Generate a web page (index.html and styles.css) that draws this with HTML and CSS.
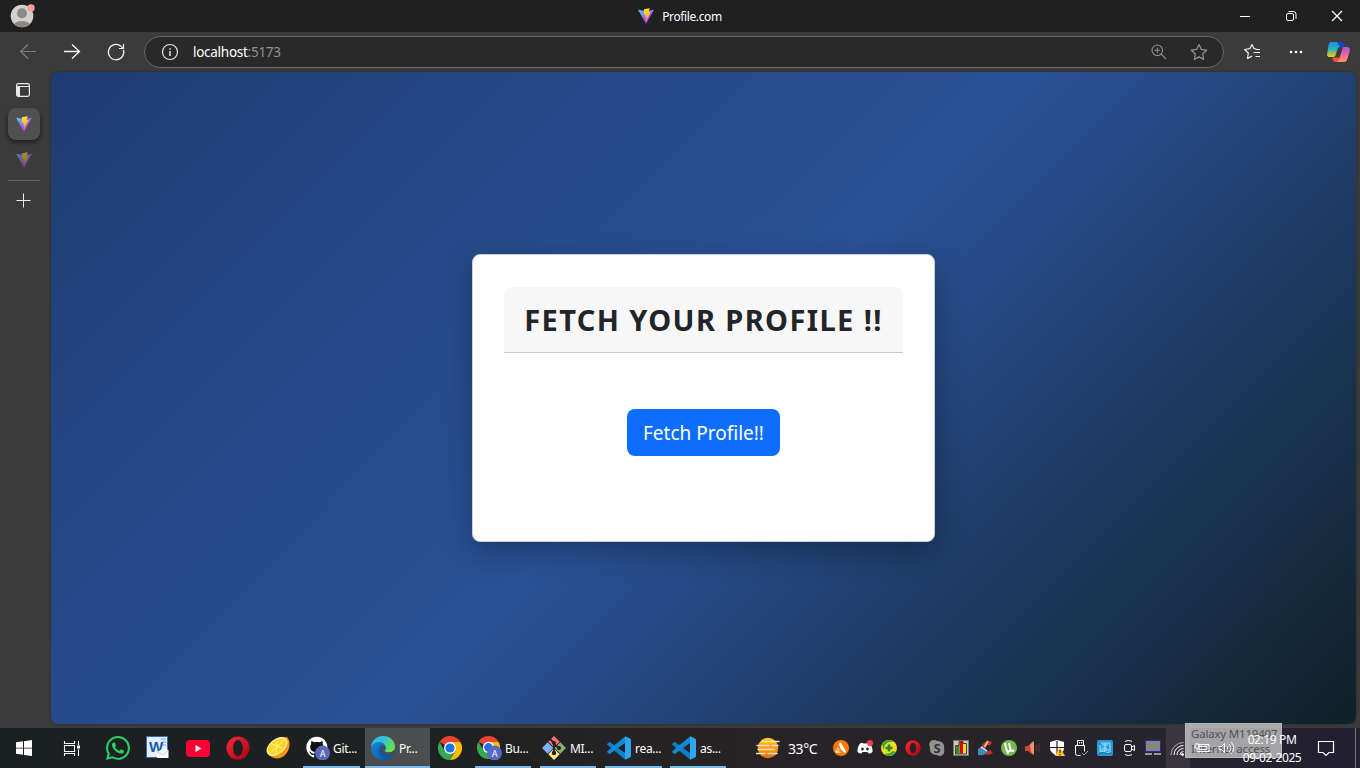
FILE: index.html
```html
<!DOCTYPE html>
<html lang="en">
<head>
<meta charset="utf-8">
<title>Profile.com</title>
<link rel="stylesheet" href="styles.css">
</head>
<body>
<svg class="defs" width="0" height="0" aria-hidden="true">
  <defs>
    <linearGradient id="va" x1="6" y1="33" x2="235" y2="344" gradientUnits="userSpaceOnUse"><stop stop-color="#41d1ff"/><stop offset="1" stop-color="#bd34fe"/></linearGradient>
    <linearGradient id="vb" x1="194" y1="9" x2="236" y2="293" gradientUnits="userSpaceOnUse"><stop stop-color="#ffea83"/><stop offset=".083" stop-color="#ffdd35"/><stop offset="1" stop-color="#ffa800"/></linearGradient>
    <linearGradient id="edgeTop" x1="0" y1="0" x2="1" y2=".5"><stop stop-color="#2fb4ea"/><stop offset=".5" stop-color="#31c3d4"/><stop offset="1" stop-color="#67e04d"/></linearGradient>
    <linearGradient id="edgeLow" x1="0" y1="0" x2="1" y2="1"><stop stop-color="#1690dc"/><stop offset="1" stop-color="#0c4f9c"/></linearGradient>
    <linearGradient id="opera" x1="0" y1="0" x2="1" y2="1"><stop stop-color="#ff2a38"/><stop offset="1" stop-color="#a70014"/></linearGradient>
    <linearGradient id="copA" x1="0" y1="0" x2="0" y2="1"><stop stop-color="#1b8cf0"/><stop offset=".5" stop-color="#2fb4b4"/><stop offset="1" stop-color="#f2d000"/></linearGradient>
    <linearGradient id="copB" x1="0" y1="0" x2="0" y2="1"><stop stop-color="#a259ec"/><stop offset=".5" stop-color="#f0619a"/><stop offset="1" stop-color="#ff9a55"/></linearGradient>
    <linearGradient id="sun" x1="0" y1="0" x2="0" y2="1"><stop stop-color="#ffcf18"/><stop offset="1" stop-color="#ee6b18"/></linearGradient>
  </defs>
  <symbol id="vite" viewBox="0 0 410 404">
    <path fill="url(#va)" d="M399.641 59.5246L215.643 388.545C211.844 395.338 202.084 395.378 198.228 388.618L10.5817 59.5563C6.38087 52.1896 12.6802 43.2665 21.0281 44.7586L205.223 77.6824C206.398 77.8924 207.601 77.8904 208.776 77.6763L389.119 44.8058C397.439 43.2894 403.768 52.1434 399.641 59.5246Z"/>
    <path fill="url(#vb)" d="M292.965 1.5744L156.801 28.2552C154.563 28.6937 152.906 30.5903 152.771 32.8664L144.395 174.33C144.198 177.662 147.258 180.248 150.51 179.498L188.42 170.749C191.967 169.931 195.172 173.055 194.443 176.622L183.18 231.775C182.422 235.487 185.907 238.661 189.532 237.56L212.947 230.446C216.577 229.344 220.065 232.527 219.297 236.242L201.398 322.875C200.278 328.294 207.486 331.249 210.492 326.603L212.5 323.5L323.454 102.072C325.312 98.3645 322.108 94.137 318.036 94.9228L279.014 102.454C275.347 103.161 272.227 99.746 273.262 96.1583L298.731 7.86689C299.767 4.27314 296.636 0.855181 292.965 1.5744Z"/>
  </symbol>
  <symbol id="chrome" viewBox="0 0 24 24">
    <path fill="#ea4335" d="M12 12L1.6 6A12 12 0 0 1 22.4 6H12z"/>
    <path fill="#fbbc05" d="M12 6H22.4A12 12 0 0 1 12 24L17.2 15z"/>
    <path fill="#34a853" d="M1.6 6L6.8 15 12 18l5.2-3L12 24A12 12 0 0 1 1.6 6z"/>
    <circle cx="12" cy="12" r="6" fill="#fff"/><circle cx="12" cy="12" r="4.6" fill="#1a73e8"/>
  </symbol>
  <symbol id="code" viewBox="0 0 24 24">
    <path fill="#0f7fcb" d="M.3 7.700L2 6.200c.4-.3.8-.3 1.200 0L18 17v6.600L.3 8.800a.8.8 0 0 1 0-1.100z"/>
    <path fill="#1389d5" d="M.3 16.300L2 17.800c.4.3.8.3 1.200 0L18 7V.4L.3 15.200a.8.8 0 0 0 0 1.100z"/>
    <path fill="#2da5f0" d="M18 .2L23 2.500c.6.3 1 .8 1 1.400v16.200c0 .6-.4 1.100-1 1.400L18 23.800z"/>
  </symbol>
  <symbol id="operaIcon" viewBox="0 0 24 24">
    <path fill="url(#opera)" fill-rule="evenodd" d="M12 .5a11.500 11.500 0 1 0 0 23 11.500 11.500 0 0 0 0-23zm0 3.500c2.800 0 4.800 3.500 4.800 8s-2 8-4.800 8-4.800-3.500-4.800-8S9.200 4 12 4z"/>
  </symbol>
</svg>
<div class="screen">
  <header class="titlebar">
    <div class="avatar">
      <svg width="26" height="26" viewBox="0 0 26 26"><circle cx="12" cy="13" r="11.300" fill="#d3d1ce"/><circle cx="12" cy="10.300" r="5" fill="#8b8986"/><path d="M4.200 21c2-4 13.600-4 15.600 0-4 4.300-11.600 4.300-15.600 0z" fill="#8b8986"/><circle cx="21" cy="5" r="3.700" fill="#ff9c98"/></svg>
    </div>
    <div class="tab-title"><svg width="16" height="16"><use href="#vite"/></svg><span>Profile.com</span></div>
    <div class="window-buttons">
      <svg width="46" height="32" fill="none" stroke="#fff"><path d="M18 16.500h10"/></svg>
      <svg width="46" height="32" fill="none" stroke="#fff"><rect x="18.500" y="13.500" width="7" height="7" rx="1.500"/><path d="M20.500 11.500h5a2.500 2.500 0 0 1 2.500 2.500v5"/></svg>
      <svg width="46" height="32" fill="none" stroke="#fff" stroke-width="1.200"><path d="M18 11l10 10M28 11L18 21"/></svg>
    </div>
  </header>

  <nav class="toolbar">
    <div class="nav-buttons">
      <svg width="44" height="40" fill="none" stroke="#7d7d7d" stroke-width="1.200"><path d="M36 19.500H20.500M28 12.500l-7.500 7 7.500 7"/></svg>
      <svg width="44" height="40" fill="none" stroke="#f5f5f5" stroke-width="1.300"><path d="M20 19.500h15.500M28 12.500l7.500 7-7.500 7"/></svg>
      <svg width="44" height="40" fill="none" stroke="#f0f0f0" stroke-width="1.200"><path d="M35.400 17.700A7.700 7.700 0 1 1 33 14.200l2 2M35.500 12v4.500H31"/></svg>
    </div>
    <div class="address">
      <svg width="18" height="18" fill="none" stroke="#e4e4e4" stroke-width="1.200"><circle cx="9" cy="9" r="7.500"/><path d="M9 8v5M9 5.200v1.500" stroke-width="1.500"/></svg>
      <span class="url">localhost<i>:5173</i></span>
      <svg class="zoom" width="16" height="16" fill="none" stroke="#929292" stroke-width="1.100"><circle cx="6.300" cy="6.300" r="5.300"/><path d="M10.200 10.200L15 15M3.500 6.300h5.600M6.300 3.500v5.600"/></svg>
      <svg width="18" height="18" fill="none" stroke="#929292" stroke-width="1.200" stroke-linejoin="round"><path d="M9 1.500l2.300 4.900 5.300.8-3.900 3.800.9 5.400L9 13.900l-4.600 2.500.9-5.400-3.900-3.800 5.300-.8z"/></svg>
    </div>
    <div class="tools">
      <svg width="44" height="40" fill="none" stroke="#f0f0f0" stroke-width="1.200" stroke-linejoin="round"><path d="M26.300 16.800l-2.400-.3L22 12.500l-2.200 4.200-5.200.8 3.700 3.500-.8 5.500 4.500-2.400M25.500 17.500H30M23.500 20.500H30M25.500 24.500H30"/></svg>
      <svg width="44" height="40" fill="#fff"><circle cx="17" cy="20" r="1.300"/><circle cx="22" cy="20" r="1.300"/><circle cx="27" cy="20" r="1.300"/></svg>
      <svg width="40" height="40" viewBox="0 0 40 40"><g transform="translate(1 0)"><path d="M12 10h9c2 0 3 1 3.600 3l.6 2h-4c-2 0-2.500 1-3 3l-1.500 5c-.5 1.500-1.500 2-3 2h-3.400c-2.300 0-2.600-2.500-1.800-5l1-6.500C10 11 11 10 12 10z" fill="url(#copA)"/><path d="M18 10h3.500c2 0 3 1 3.600 3l.8 2.500h-5z" fill="#1747c9"/><path d="M24 15h3.800c3 0 3.500 2.500 2.700 5l-2 6.500c-.7 2.500-1.800 3.500-3.500 3.500h-8l3.500-4 2.500-8c.5-2 .8-3 2-3z" fill="url(#copB)"/><path d="M13 25.500h7c-.5 3-1 4.500-3 4.500-2.500 0-3-1.500-4-4.500z" fill="#f04f3c"/></g></svg>
    </div>
  </nav>

  <div class="body">
    <aside class="side">
      <svg class="panel" width="16" height="16"><rect x="1.600" y="1.600" width="12.800" height="12.800" rx="1.800" fill="none" stroke="#e8e8e8" stroke-width="1.200"/><path d="M2 4.500h12" stroke="#e8e8e8"/><path d="M1.500 4.500H5v10H3a1.500 1.500 0 0 1-1.500-1.500z" fill="#e8e8e8"/></svg>
      <div class="side-tab active"><svg width="16" height="16"><use href="#vite"/></svg></div>
      <div class="side-tab dim"><svg width="16" height="16"><use href="#vite"/></svg></div>
      <div class="rule"></div>
      <svg class="plus" width="16" height="16" fill="none" stroke="#ededed"><path d="M.5 8.500h14M7.500 1.500v14"/></svg>
    </aside>
    <main class="page">
      <section class="card">
        <h1 class="card-header"><span>FETCH YOUR PROFILE !!</span></h1>
        <button class="fetch"><span>Fetch Profile!!</span></button>
      </section>
    </main>
  </div>

  <footer class="taskbar">
    <div class="start"><svg width="16" height="16" fill="#fff"><path d="M0 2.300l7-1v6.400H0zM8 1.200L16 0v7.700H8zM0 8.500h7v6.300l-7-1zM8 8.500h8V16l-8-1.100z"/></svg></div>
    <div class="view"><svg width="17" height="17" fill="none" stroke="#fff" stroke-width="1.100"><path d="M1.500 1v2.500h10V1M1.500 16v-2.500h10V16M1.500 5.500h10v6h-10zM15.500 1v4M15.500 9.500V16"/><path d="M14 5.500h3v3h-3z" fill="#fff" stroke="none"/></svg></div>
    <div class="pin"><svg width="24" height="24" viewBox="0 0 16 16" fill="#25d366"><path d="M13.601 2.326A7.850 7.850 0 0 0 7.994 0C3.627 0 .068 3.558.064 7.926c0 1.399.366 2.760 1.057 3.965L0 16l4.204-1.102a7.900 7.900 0 0 0 3.790.965h.004c4.368 0 7.926-3.558 7.930-7.930A7.900 7.900 0 0 0 13.600 2.326zM7.994 14.521a6.600 6.600 0 0 1-3.356-.92l-.24-.144-2.494.654.666-2.433-.156-.251a6.560 6.560 0 0 1-1.007-3.505c0-3.626 2.957-6.584 6.591-6.584a6.560 6.560 0 0 1 4.660 1.931 6.560 6.560 0 0 1 1.928 4.660c-.004 3.639-2.961 6.592-6.592 6.592m3.615-4.934c-.197-.099-1.170-.578-1.353-.646-.182-.065-.315-.099-.445.099-.133.197-.513.646-.627.775-.114.133-.232.148-.43.05-.197-.1-.836-.308-1.592-.985-.59-.525-.985-1.175-1.103-1.372-.114-.198-.011-.304.088-.403.087-.088.197-.232.296-.346.1-.114.133-.198.198-.33.065-.134.034-.248-.015-.347-.05-.099-.445-1.076-.612-1.470-.16-.389-.323-.335-.445-.340-.114-.007-.247-.007-.38-.007a.73.73 0 0 0-.529.247c-.182.198-.691.677-.691 1.654s.71 1.916.81 2.049c.098.133 1.394 2.132 3.383 2.992.47.205.84.326 1.129.418.475.152.904.129 1.246.08.38-.058 1.171-.48 1.338-.943.164-.464.164-.86.114-.992-.049-.133-.182-.248-.38-.347"/></svg></div>
    <div class="pin"><svg width="24" height="24"><path d="M.5.500h21v21H.500z" fill="#e4edf9" stroke="#2a6fb8"/><path d="M15 3h5M16 6h4M16 9h4" stroke="#7ba7d8"/><text x="3" y="16" class="word">W</text><path d="M11 16l8-4.500 3.500 3V22H11z" fill="#fff"/><path d="M11 16l6.500 3 5-5" stroke="#a9b9cc" fill="none" stroke-width=".7"/></svg></div>
    <div class="pin"><svg width="24" height="24"><rect y="4" width="24" height="17" rx="4" fill="#ff0033"/><path d="M9.500 9v7l6-3.500z" fill="#fff"/></svg></div>
    <div class="pin"><svg width="24" height="24"><use href="#operaIcon"/></svg></div>
    <div class="pin"><svg width="24" height="24"><path d="M1.500 17C-1 10 7 2 21 1c4 4 3.500 14-3 19-5 4-13 3-16.500-3z" fill="#ff970f"/><ellipse cx="11" cy="10.500" rx="12" ry="7.500" transform="rotate(-39 11 10.500)" fill="#fff2aa"/><ellipse cx="11" cy="10.500" rx="10.500" ry="6.200" transform="rotate(-39 11 10.500)" fill="#ffd51f"/><path d="M4 17L18 4M6 8l10 4M11 5l-1 12" stroke="#fff4b0" stroke-width=".9"/></svg></div>

    <div class="task git"><svg width="24" height="24" viewBox="0 0 24 24"><circle cx="11" cy="11" r="9.500" fill="#111"/><path transform="translate(.3 .8) scale(1.320)" fill="#fff" d="M8 0C3.580 0 0 3.580 0 8c0 3.540 2.290 6.530 5.470 7.590.4.07.55-.17.55-.38 0-.19-.01-.82-.01-1.490-2.010.37-2.530-.49-2.690-.94-.09-.23-.48-.94-.82-1.130-.28-.15-.68-.52-.01-.53.63-.01 1.080.58 1.230.82.72 1.210 1.870.87 2.330.66.07-.52.28-.87.51-1.070-1.780-.2-3.640-.89-3.640-3.950 0-.87.31-1.590.82-2.150-.08-.2-.36-1.020.08-2.120 0 0 .67-.21 2.200.82.64-.18 1.320-.27 2-.27s1.360.09 2 .27c1.530-1.040 2.200-.82 2.200-.82.44 1.100.16 1.920.08 2.120.51.56.82 1.270.82 2.150 0 3.070-1.870 3.750-3.650 3.950.29.25.54.73.54 1.480 0 1.070-.01 1.930-.01 2.200 0 .21.15.46.55.38A8.010 8.010 0 0 0 16 8c0-4.420-3.580-8-8-8z"/><circle cx="16.500" cy="17" r="7.500" fill="#5a68be"/><text x="16.500" y="20.500" class="badge">A</text></svg><span>Git...</span></div>
    <div class="task edge"><svg width="24" height="24" viewBox="0 0 24 24"><circle cx="12" cy="12" r="12" fill="url(#edgeLow)"/><path d="M0 10.500C1 4.500 6 0 12 0c7 0 12 5 12 10.500 0 4-3 6-6.500 6-2.500 0-4-1-4-1.700 0-.8 1.200-1 1.200-3C14.700 8.500 12 6 8.500 6 5 6 1.500 7.500 0 10.500z" fill="url(#edgeTop)"/><path d="M8 12.500c-1.500 5 2.500 10 7.500 10.300 3-.6 5.500-2.500 7-5-4 2.500-12 2-12-5.300 0-2 1-3.200 2-3.700-2-.6-3.800 1.200-4.500 3.700z" fill="#0b58a6"/><path d="M10.500 12.500c0-1.600.6-2.800 1.600-3.500 1.600.4 2.500 1.600 2.600 3.200-.1 1.600-1.200 1.900-1.200 2.600s1.500 1.700 4 1.700c2.300 0 4.300-.8 5.500-2.500-.1 1.200-.1 2.400-.5 3.700-4 2.300-12 2-12-5.200z" fill="#494b4d"/></svg><span>Pr...</span></div>
    <div class="pin"><svg width="24" height="24"><use href="#chrome"/></svg></div>
    <div class="task bu"><svg width="25" height="24" viewBox="0 0 25 24"><use href="#chrome" width="23" height="23"/><circle cx="17.500" cy="17" r="7.500" fill="#5a68be"/><text x="17.500" y="20.500" class="badge">A</text></svg><span>Bu...</span></div>
    <div class="task mi"><svg width="24" height="24" viewBox="0 0 24 24"><path d="M12 0l5.700 5.700L12 11.500 6.300 5.700z" fill="#ff7070"/><path d="M18.300 6.300L24 12l-5.700 5.700-5.700-5.700z" fill="#80b36d"/><path d="M5.700 6.300l5.700 5.700-5.700 5.700L0 12z" fill="#80b3ff"/><path d="M12 12.600l5.700 5.700L12 24l-5.700-5.700z" fill="#ffe680"/><path d="M8 3l4 4v10M12 8l5 4" stroke="#241f1c" stroke-width="1.800" fill="none"/><circle cx="12" cy="7" r="2" fill="#241f1c"/><circle cx="12" cy="17" r="2.200" fill="#241f1c"/><circle cx="17" cy="12" r="2" fill="#241f1c"/></svg><span>MI...</span></div>
    <div class="task rea"><svg width="24" height="24"><use href="#code"/></svg><span>rea...</span></div>
    <div class="task as"><svg width="24" height="24"><use href="#code"/></svg><span>as...</span></div>

    <div class="weather"><svg width="24" height="24" viewBox="0 0 24 24"><circle cx="12" cy="12" r="10.200" fill="url(#sun)"/><path d="M6 5.500h17M1 9.500h12M16 9.500h6M2 13.500h16M0 17.500h9M12 17.500h9" stroke="#f7e3bb" stroke-width="1.500" stroke-linecap="round"/></svg><span>33°C</span></div>

    <div class="tray">
      <svg width="16" height="16" viewBox="0 0 16 16"><circle cx="8" cy="8" r="8" fill="#ff7800"/><path d="M6.500 3c.6-.7 1.500-.4 2 .5l4.500 8c.3 1-.4 1.600-1.300 1.200C9 11 7 8.500 6.200 5c-.2-.9-.1-1.500.3-2zM4.500 6.500c.8 2.500 2.500 4.300 5 5.700L4 9z M3.200 10l5.300 2.700H3.300c-1 0-1.300-1.300-.1-2.700z" fill="#fff"/></svg>
      <svg width="16" height="16" viewBox="0 0 16 16"><path d="M3 3.500c2-1 3-.8 3.500 0h3c.5-.8 1.500-1 3.500 0 1.800 2.600 2.800 5.500 2.500 8.500-1.500 1.200-3 1.600-4 1.500l-1-1.500h-5l-1 1.500c-1 .1-2.500-.3-4-1.500C.2 9 1.200 6 3 3.500z" fill="#fff"/><ellipse cx="5.500" cy="9" rx="1.400" ry="1.600" fill="#29292d"/><ellipse cx="10.500" cy="9" rx="1.400" ry="1.600" fill="#29292d"/><circle cx="13" cy="3" r="3" fill="#f23f43"/></svg>
      <svg width="16" height="16" viewBox="0 0 16 16"><circle cx="8" cy="8" r="8" fill="#f7d928"/><path d="M1 4A8 8 0 0 1 13 2c-3-.5-7 0-9 3l-1.500 5zM15 12A8 8 0 0 1 3 14c4 0 7-1 9-3z" fill="#35a936"/><path d="M8 4.500v7M4.500 8h7" stroke="#188d29" stroke-width="2.700"/></svg>
      <svg width="16" height="16"><use href="#operaIcon"/></svg>
      <svg width="16" height="16" viewBox="0 0 16 16"><path d="M5 0a5 5 0 0 1 3 1c5 0 8 3 7 8 1 4-1 7-5 7a5 5 0 0 1-2-1C3 15 0 12 1 7-1 4 1 0 5 0z" fill="#939393"/><text x="8" y="12.500" class="skype">S</text></svg>
      <svg width="16" height="16"><path d="M.5.500h15v15H.500z" fill="#ccc9bd" stroke="#777"/><path d="M3 6h3v7.500H3z" fill="#139b22"/><path d="M6.500 2h3.500v11.500H6.500z" fill="#e40012"/><path d="M10 4h3v9.500h-3z" fill="#f2df21"/><path d="M2.500 5.500h3.500v-4h4v2h3.500v10.500h-11z" stroke="#222" stroke-width=".8" fill="none"/></svg>
      <svg width="16" height="16"><path d="M14 4A4.800 4.800 0 1 0 14.500 11.500" stroke="#bf3528" stroke-width="4" fill="none"/><path d="M1 9l4-3 5 5c-1 4-5 5-9 4z" fill="#4487bf"/><path d="M4 7l6 4" stroke="#e7e2d8" stroke-width="1.500"/><path d="M11 1L7.500 7" stroke="#dfbc84" stroke-width="2"/></svg>
      <svg width="16" height="16" viewBox="0 0 16 16"><circle cx="8" cy="8" r="8" fill="#72b84a"/><path d="M4 3l1.500 7c.5 2 4 2 4-.5L8 3M9.500 9c.3 2 2 2.500 3.500 1M5.500 9L7 14" stroke="#fff" stroke-width="2" fill="none"/></svg>
      <svg width="16" height="16"><path d="M0 6h3l5-5v14l-5-4H0z" fill="#c94b30"/><path d="M5 5l4-4v14l-3-4z" fill="#f39570"/><path d="M11.500 5v6M14 3.500v9" stroke="#67362f"/></svg>
      <svg width="16" height="16"><path d="M8 0l7 2v6c0 4-4 6-7 8-3-2-7-4-7-8V2z" fill="#fff"/><path d="M8 1v14M1 7.500h14" stroke="#222" stroke-width="1.200"/><path d="M11 7l5 9H6z" fill="#ffc229"/><path d="M11 10v3M11 14v1.200" stroke="#26251c" stroke-width="1.200"/></svg>
      <svg width="16" height="16" fill="none" stroke="#fff"><path d="M4.500 5.500v-5h6v5M2.500 5.500h9v6M2.500 5.500v8a2 2 0 0 0 2 2h3"/><path d="M6.500 2v1.500M8.500 2v1.500"/><path d="M9 13l2 2 4-4" stroke="#aaa"/></svg>
      <svg width="16" height="16"><rect width="16" height="16" rx="2" fill="#249bd8"/><path d="M4 3h9v7H3V5M5 5h6M5 8h5M2 12c4-3 8 3 12-1M8 3v8" stroke="#a9e1fa" fill="none"/><path d="M2 14c4-3 9 1 12-1" stroke="#126594" fill="none"/></svg>
      <svg width="16" height="16" fill="none" stroke="#fff"><rect x="3.500" y="4.500" width="7" height="7" rx="1.500"/><path d="M10.500 7l3-1.500v5l-3-1.500M4 1.500c2-1.200 5-1.200 7 0M4 14.500c2 1.200 5 1.200 7 0"/></svg>
      <svg width="16" height="16"><path d="M.5.500h15v11H.500z" fill="#858585" stroke="#282c96"/><path d="M0 14h7M9 14h7" stroke="#999" stroke-width="2"/></svg>
    </div>
    <div class="wifi"><svg width="16" height="16" fill="none" stroke="#fff"><path d="M1 15A12.500 12.500 0 0 1 13.500 2.500" stroke="#aaa"/><path d="M4 15a9.500 9.500 0 0 1 9.500-9.500M7 15a6.500 6.500 0 0 1 6.500-6.500M10 15a3.500 3.500 0 0 1 3.500-3.500"/><circle cx="12.500" cy="14.500" r="1" fill="#fff"/></svg></div>
    <div class="status"><svg width="16" height="16" fill="none" stroke="#fff"><path d="M4 4.500h11v7H4M5 6.500h8v3H5zM1 5v3h4V5M2 3v2M4 3v2M3 8v4"/></svg></div>
    <div class="status"><svg width="16" height="16" fill="none" stroke="#fff"><path d="M1 6.500h2.500l3-3v9l-3-3H1zM9 6c1 1 1 3 0 4M11 4c2.500 2.500 2.500 5.500 0 8M13 2c3.500 3.500 3.500 8.500 0 12"/></svg></div>
    <div class="clock"><span>02:19 PM</span><span>09-02-2025</span></div>
    <div class="notice"><svg width="18" height="18" fill="none" stroke="#fff" stroke-width="1.200"><path d="M1.500 2.500h15v11H12l-3 3-3-3H1.500z"/></svg></div>
    <div class="desktop-edge"></div>
    <div class="tooltip"><span>Galaxy M119407</span><span>Internet access</span></div>
  </footer>
</div>
</body>
</html>
```
FILE: styles.css
```css
* { box-sizing: border-box; }
body { margin: 0; font-family: "Noto Sans", "Open Sans", sans-serif; overflow: hidden; }
svg { display: block; flex: none; }
span { white-space: nowrap; }
.defs { position: absolute; }
.screen { width: 1360px; height: 768px; display: flex; flex-direction: column; background: #3b3b3b; }

.titlebar { height: 32px; flex: none; display: grid; grid-template-columns: 1fr auto 1fr; background: #202020; color: #fff; }
.avatar { padding: 3px 0 0 10px; }
.tab-title { display: flex; align-items: center; gap: 8px; font-size: 12px; letter-spacing: -0.38px; }
.window-buttons { display: flex; justify-content: flex-end; }

.toolbar { height: 40px; flex: none; display: flex; align-items: center; }
.nav-buttons { display: flex; width: 144px; }
.address { width: 1080px; height: 32px; display: flex; align-items: center; padding: 0 15px 0 16px; background: #292929; border: 1px solid #686868; border-radius: 16px; }
.url { flex: 1; margin-left: 14px; color: #fff; font-size: 13.5px; letter-spacing: -0.27px; }
.url i { font-style: normal; color: #919191; }
.zoom { margin-right: 23px; }
.tools { display: flex; margin-left: 6px; }

.body { height: 656px; flex: none; display: flex; padding: 0 4px 4px 0; }
.side { width: 51px; display: flex; flex-direction: column; padding: 10px 0 0 8px; }
.panel { margin-left: 7px; }
.side-tab { width: 32px; height: 32px; display: grid; place-items: center; border-radius: 8px; }
.active { margin-top: 10px; background: #505050; box-shadow: 0 2px 4px rgba(0, 0, 0, .55); }
.dim { margin-top: 4px; }
.dim svg { opacity: .5; }
.rule { width: 32px; height: 1px; margin-top: 4px; background: #656565; }
.plus { margin: 11px 0 0 8px; }

.page { flex: 1; display: flex; justify-content: center; align-items: center; border-radius: 8px; background: linear-gradient(135deg, #1e3c72, #2a5298, #0f2027); box-shadow: 0 0 3px rgba(0, 0, 0, .35); overflow: hidden; }
.card { width: 463px; height: 288px; display: flex; flex-direction: column; align-items: center; padding: 32px 31px; background: #fff; border: 1px solid #c9ced8; border-radius: 8px; box-shadow: 0 10px 30px rgba(0, 0, 0, .3); }
.card-header { align-self: stretch; height: 66px; margin: 0; display: flex; align-items: center; justify-content: center; background: #f7f7f7; border-bottom: 1px solid #c9c9c9; border-radius: 7px 7px 0 0; color: #212529; font: 700 29px/1 "Noto Sans", sans-serif; letter-spacing: 1.4px; }
.fetch { width: 153px; height: 47px; margin-top: 56px; padding: 2px 0 0; border: 0; border-radius: 8px; background: #0d6efd; color: #fff; font: 400 19px/1 "Noto Sans", sans-serif; }

.taskbar { position: relative; z-index: 0; height: 40px; flex: none; display: flex; align-items: stretch; background: linear-gradient(90deg, #1b2022 0, #1e2021 30%, #262325 50%, #272429 75%, #252331 92%, #211f30 100%); color: #fff; font-size: 12px; }
.start, .view, .pin, .wifi, .status, .notice { display: grid; place-items: center; flex: none; }
.start { width: 48px; }
.view { width: 46px; margin-right: 4px; }
.pin { width: 40px; }
.task { flex: none; display: flex; align-items: center; width: 56px; gap: 4px; padding-left: 2px; border-bottom: 2px solid #76b9ed; padding-top: 2px; letter-spacing: -0.3px; }
.git { width: 57px; margin-left: 5px; padding-left: 3px; gap: 3px; }
.edge { width: 65px; margin-left: 5px; padding-left: 6px; background: #4b4d4f; }
.bu { margin-left: 5px; gap: 3px; }
.mi { margin-left: 9px; }
.rea { width: 57px; margin-left: 9px; }
.as { margin-left: 8px; }
.weather { width: 73px; margin-left: 30px; display: flex; align-items: center; gap: 8px; flex: none; font-size: 14px; letter-spacing: -0.4px; }
.tray { width: 336px; display: grid; grid-template-columns: repeat(14, 24px); place-items: center; flex: none; }
.wifi { width: 24px; margin-left: 1px; background: #39363d; }
.status { width: 24px; position: relative; z-index: 2; }
.clock { width: 68px; position: relative; z-index: 2; display: flex; flex-direction: column; align-items: center; justify-content: center; padding-top: 1px; line-height: 18px; letter-spacing: -0.4px; }
.notice { width: 40px; }
.desktop-edge { margin-left: 9px; width: 1px; background: #777580; }
.tooltip { position: absolute; z-index: 1; left: 1185px; top: -5px; width: 97px; height: 35px; display: flex; flex-direction: column; padding: 2px 0 0 5px; border: 1px solid rgba(185, 185, 185, .8); background: rgba(225, 225, 225, .68); color: #55504f; line-height: 15px; font-size: 11.5px; letter-spacing: -0.2px; }
.word { font: 700 15px "Liberation Sans", sans-serif; fill: #165ba8; }
.badge { font: 9px Roboto, sans-serif; fill: #fff; text-anchor: middle; }
.skype { font: 700 13px "Open Sans", sans-serif; fill: #333; text-anchor: middle; }
```
